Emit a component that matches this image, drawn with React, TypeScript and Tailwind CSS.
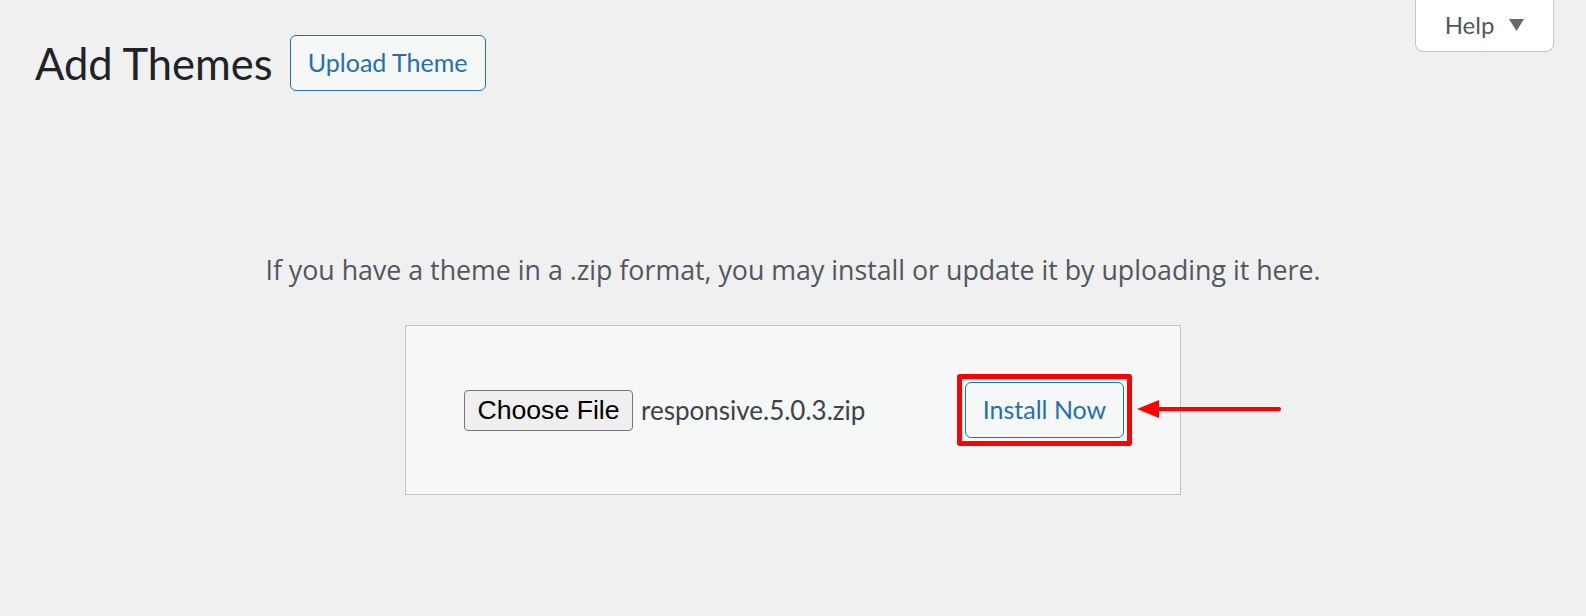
const wpFont = "font-['Lato','Noto_Sans',sans-serif]";

function Arrow() {
  return (
    <svg
      width="146"
      height="20"
      viewBox="0 0 146 20"
      className="absolute left-[calc(100%+12px)] top-1/2 -translate-y-[11px]"
    >
      <path d="M1 10 L23 1 L23 19 Z" fill="#ff0000" />
      <line x1="20" y1="10" x2="143" y2="10" stroke="#ff0000" strokeWidth="4" strokeLinecap="round" />
    </svg>
  );
}

export default function App() {
  return (
    <div className={`min-h-[616px] w-full bg-[#f0f0f1] ${wpFont}`}>
      <div className="flex items-start justify-between pl-[35px] pr-[32px]">
        <div className="mt-[35px] flex items-center gap-[17px]">
          <h1 className="text-[43.5px] leading-[56px] font-normal text-[#1d2327]">Add Themes</h1>
          <button className="h-[56px] w-[196px] rounded-[6px] border border-[#2271b1] bg-[#f6f7f7] text-[25px] text-[#2271b1]">
            Upload Theme
          </button>
        </div>
        <button className="flex h-[52px] w-[139px] items-center justify-center gap-[15px] rounded-b-[8px] border border-t-0 border-[#c3c4c7] bg-white pb-[1px] text-[24px] text-[#50575e]">
          <span>Help</span>
          <svg width="15" height="12" viewBox="0 0 15 12">
            <path d="M0 0 H15 L7.5 12 Z" fill="#646970" />
          </svg>
        </button>
      </div>

      <p className="mt-[161px] text-center font-['Open_Sans','Noto_Sans',sans-serif] text-[26.75px] leading-[36px] text-[#50575e]">
        If you have a theme in a .zip format, you may install or update it by uploading it here.
      </p>

      <div className="mx-auto mt-[37px] flex h-[170px] w-[776px] items-center justify-between border border-[#c3c4c7] bg-[#f6f7f7] pl-[58px] pr-[56px]">
        <div className="flex items-center gap-[8px]">
          <div className="flex h-[41px] w-[169px] items-center justify-center rounded-[4px] border border-[#767676] bg-[#efefef] font-['Liberation_Sans',Arial,sans-serif] text-[26.67px] text-black">
            Choose File
          </div>
          <span className="text-[26px] text-[#3c434a]">responsive.5.0.3.zip</span>
        </div>
        <div className="relative">
          <button className="h-[56px] w-[159px] rounded-[6px] border border-[#2271b1] bg-[#f6f7f7] text-[25px] text-[#2271b1]">
            Install Now
          </button>
          <span className="pointer-events-none absolute -inset-[8px] rounded-[3px] border-[5px] border-[#ff0000]" />
          <Arrow />
        </div>
      </div>
    </div>
  );
}
